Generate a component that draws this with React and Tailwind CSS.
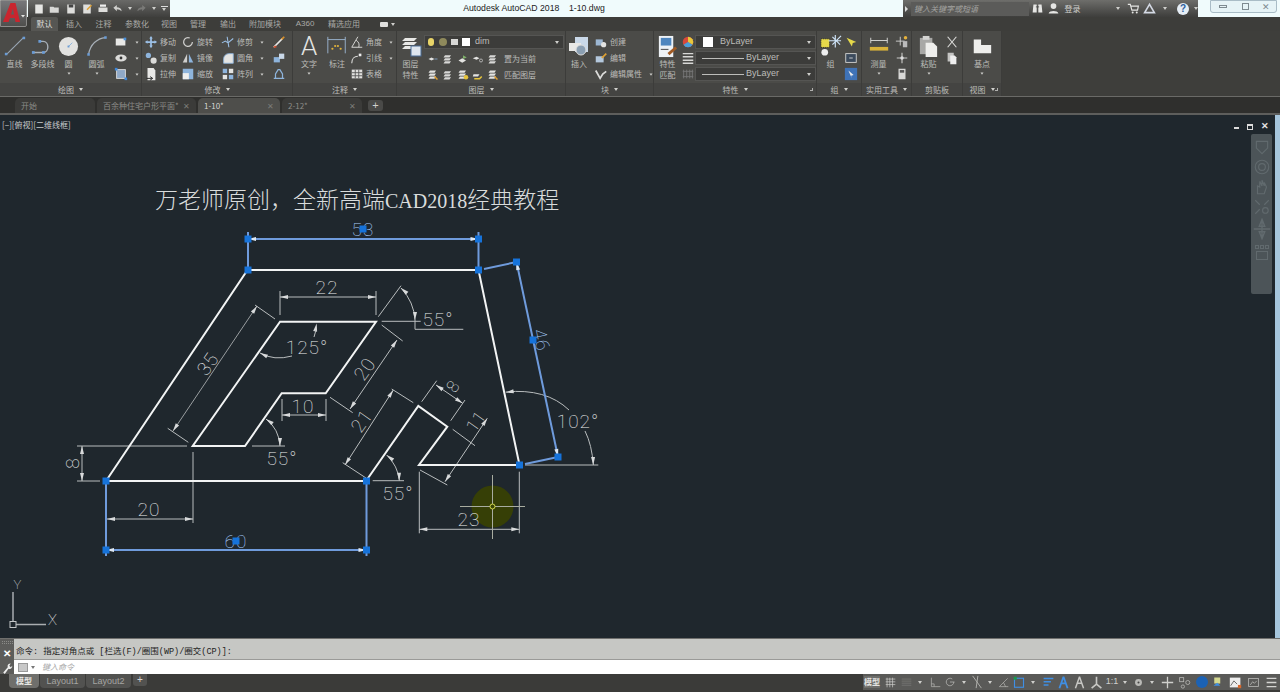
import React from 'react'

const CJK = '"Noto Sans CJK SC", "Noto Sans", sans-serif'

const Caret = ({ className = '' }) => (
    <span className={`inline-block w-0 h-0 border-x-[2.5px] border-x-transparent border-t-[3px] border-t-[#cfcfcc] ${className}`} />
)

const Ic = ({ size = 14, vb = 16, children, className = '' }) => (
    <svg width={size} height={size} viewBox={`0 0 ${vb} ${vb}`} className={`shrink-0 ${className}`}>{children}</svg>
)

// ribbon icons, all drawn on a 16 grid
const icons = {
    rect: <><rect x="2" y="4" width="11" height="8" fill="#e8e8e6" /><rect x="11" y="3" width="3" height="3" fill="#4a90d9" /></>,
    ellipse: <><ellipse cx="8" cy="8" rx="6.5" ry="4" fill="#dcdcda" /><circle cx="8" cy="8" r="1.6" fill="#333" /></>,
    hatch: <><rect x="3" y="3" width="10" height="10" fill="#8fa9c8" stroke="#e0e0e0" /><rect x="1" y="1" width="3" height="3" fill="#3f87d8" /><rect x="12" y="12" width="3" height="3" fill="#3f87d8" /></>,
    move: <path d="M8 1l2 3H9v3h3V6l3 2-3 2V9H9v3h1l-2 3-2-3h1V9H4v1L1 8l3-2v1h3V4H6z" fill="#9cc0e6" />,
    copy: <><circle cx="5" cy="5" r="3" fill="#8eb4dc" /><circle cx="11" cy="11" r="3.5" fill="#dcdcda" /></>,
    stretch: <><path d="M4 1h7l2 3v11H4z" fill="#e8e8e6" /><path d="M3 13h6M7 11l3 2-3 2" stroke="#1a1a1a" fill="none" /></>,
    rotate: <path d="M13 8a5 5 0 1 1-3-4.6" stroke="#d0d0ce" strokeWidth="1.4" fill="none" />,
    mirror: <><path d="M7 3v10H2z" fill="#cfcfcd" /><path d="M9 3v10h5z" fill="#8eb4dc" /></>,
    scale: <><rect x="2" y="2" width="12" height="12" fill="#8eb4dc" /><rect x="2" y="7" width="7" height="7" fill="#eee" /></>,
    trim: <path d="M1 9l4-2 3 2 6-5M7 2l2 12" stroke="#9cc0e6" fill="none" strokeWidth="1.2" />,
    fillet: <path d="M3 14V9a6 6 0 0 1 6-6h5v11z" fill="#e4e4e2" stroke="#8eb4dc" />,
    array: <><rect x="2" y="2" width="5" height="5" fill="#8eb4dc" /><rect x="9" y="2" width="5" height="5" fill="#e4e4e2" /><rect x="2" y="9" width="5" height="5" fill="#e4e4e2" /><rect x="9" y="9" width="5" height="5" fill="#8eb4dc" /></>,
    brush: <><path d="M2 14L12 4" stroke="#e8e8e6" strokeWidth="2" /><path d="M11 5l3-3" stroke="#d8902c" strokeWidth="2" /><path d="M2 14l3-1" stroke="#d05030" strokeWidth="2" /></>,
    boxes: <><rect x="2" y="7" width="7" height="6" fill="#8eb4dc" /><rect x="8" y="3" width="6" height="6" fill="#c9d8e8" /></>,
    offset: <path d="M2 13h12M4 13V8l3-5h2l3 5v5" stroke="#8eb4dc" strokeWidth="1.4" fill="none" />,
    angle: <path d="M2 14L9 2M2 14h12M7 6a7 7 0 0 1 3 8" stroke="#d8d8d6" fill="none" strokeWidth="1.1" />,
    leader: <><path d="M2 14c0-5 3-8 7-8" stroke="#d8d8d6" fill="none" strokeWidth="1.3" /><rect x="10" y="3" width="3" height="3" fill="#eee" /></>,
    table: <><rect x="2" y="3" width="12" height="10" fill="#e0e0de" /><path d="M2 6.5h12M2 10h12M6 3v10M10 3v10" stroke="#555" /></>,
    layerA: <><path d="M2 8l4-2 4 2-4 2z" fill="#e4e4e2" /><path d="M10 8h4" stroke="#8eb4dc" /></>,
    layerB: <><path d="M4 3h8l-2 3H2zM4 7h8l-2 3H2zM4 11h8l-2 3H2z" fill="#d8d8d6" /></>,
    layerC: <><path d="M2 10l5-3 5 3-5 3z" fill="#e4e4e2" /><path d="M8 3l5 3-5 2z" fill="#7fb06a" /></>,
    layerD: <><path d="M1 7l5-2 4 2-4 2z" fill="#e4e4e2" /><circle cx="12" cy="10" r="2" fill="none" stroke="#ccc" /></>,
    layerE: <><path d="M4 2h8l-2 3H2zM4 6h8l-2 3H2zM4 10h8l-2 3H2z" fill="#e4e4e2" /><path d="M10 10l4 4" stroke="#e0a030" strokeWidth="2" /></>,
    layerF: <><path d="M4 2h8l-2 3H2zM4 6h8l-2 3H2zM4 10h8l-2 3H2z" fill="#e4e4e2" /><circle cx="12" cy="11" r="3" fill="#e6c43c" /></>,
    layerG: <><path d="M2 7h8l-2 3H1z" fill="#e4e4e2" /><path d="M3 13h7l3-3" stroke="#e6c43c" strokeWidth="2" fill="none" /></>,
    create: <><rect x="2" y="5" width="8" height="7" fill="#9cb6d2" /><circle cx="11" cy="11" r="3" fill="#e4e4e2" /></>,
    edit: <><rect x="2" y="6" width="9" height="7" fill="#b4c8dc" /><path d="M9 8l5-5" stroke="#e0a030" strokeWidth="2" /></>,
    attr: <path d="M2 4l5 9 3-5 4-3" stroke="#dcdcda" fill="none" strokeWidth="2" />,
    wheel: <><circle cx="8" cy="8" r="6" fill="#d9493a" /><path d="M8 8V2a6 6 0 0 1 5.2 9z" fill="#e8c83c" /><path d="M8 8l5.2 3A6 6 0 0 1 2.8 11z" fill="#4a9fd9" /></>,
    lines: <path d="M2 3h12M2 6.5h12M2 10.5h12M2 14h12" stroke="#d8d8d6" strokeWidth="1.6" />,
    ltype: <path d="M3 3v10M6.5 3v10M10 3v10M13 3v10M2 5h12M2 11h12" stroke="#777" />,
    selA: <><path d="M3 3l6 10 1-4 4-1z" fill="#e6d94a" /></>,
    selB: <><rect x="2" y="3" width="12" height="10" fill="#3b4a5c" stroke="#d8d8d6" /><path d="M6 8h4" stroke="#ddd" /></>,
    selC: <><rect x="1" y="1" width="14" height="14" fill="#3f73b8" /><path d="M5 4l6 5-3 1 1 3z" fill="#eee" /></>,
    pt: <><path d="M8 2v12M2 8h12" stroke="#c8c8c6" strokeWidth="1.3" /><circle cx="8" cy="8" r="2" fill="#ddd" /></>,
    ptA: <><path d="M6 2v10M1 7h10" stroke="#d8d8d6" /><rect x="9" y="7" width="5" height="7" fill="#bbb" /><circle cx="12" cy="3" r="2" fill="#e6b23c" /></>,
    calc: <><rect x="4" y="2" width="8" height="12" fill="#d8d8d6" /><rect x="5.5" y="3.5" width="5" height="3" fill="#555" /></>,
    cut: <path d="M3 2l10 12M13 2L3 14" stroke="#dcdcda" strokeWidth="1.3" />,
    dup: <><rect x="3" y="2" width="7" height="10" fill="#c4c4c2" /><path d="M6 5h5l2 2v8H6z" fill="#eee" /></>,
}

const Icon = ({ name, size = 14 }) => <Ic size={size}>{icons[name]}</Ic>

const BigTool = ({ w, children, label, label2, caret }) => (
    <div className="flex flex-col items-center shrink-0" style={{ width: w }}>
        <div className="h-[24px] shrink-0 flex items-center justify-center">{children}</div>
        <span className="text-[8px] leading-[11px] text-[#bcbcb9] whitespace-nowrap">{label}</span>
        {label2 && <span className="text-[8px] leading-[11px] text-[#bcbcb9] whitespace-nowrap">{label2}</span>}
        {caret && <Caret className="mt-[3px] scale-75" />}
    </div>
)

const Row = ({ icon, label, caret, node }) => (
    <div className="h-[16px] flex items-center gap-[2px]">
        {node || <Icon name={icon} />}
        {label && <span className="text-[8px] text-[#bcbcb9] whitespace-nowrap">{label}</span>}
        {caret && <Caret className="ml-[5px] scale-75" />}
    </div>
)

const Col = ({ w, className = '', children }) => (
    <div className={`flex flex-col shrink-0 ${className}`} style={{ width: w }}>{children}</div>
)

const Panel = ({ w, title, launcher, noCaret, children }) => (
    <div className="flex flex-col shrink-0 bg-[#4b4b48] border-r border-[#3c3c3a]" style={{ width: w }}>
        <div className="h-[52px] flex pt-[3px]">{children}</div>
        <div className="h-[13px] bg-[#444442] flex items-center justify-center gap-[5px] relative">
            <span className="text-[8px] text-[#bcbcb9]">{title}</span>
            {!noCaret && <Caret />}
            {launcher && <span className="absolute right-[3px] top-[5px] w-[3px] h-[3px] border-r border-b border-[#b0b0ae]" />}
        </div>
    </div>
)

const Combo = ({ children }) => (
    <div className="h-[14px] mb-[2px] bg-[#3c3c3a] border border-[#555553] flex items-center pr-[4px]">
        <div className="flex-1 flex items-center min-w-0">{children}</div>
        <Caret />
    </div>
)

const ByLayer = () => (
    <>
        <span className="w-[42px] h-[1px] bg-[#bdbdba] ml-[6px] mr-[2px]" />
        <span className="text-[9px] text-[#bcbcb9]" style={{ fontFamily: '"Liberation Sans", sans-serif' }}>ByLayer</span>
    </>
)

const RibbonTab = ({ w, children, active }) => (
    <div
        className={`h-[14px] flex items-center justify-center text-[8px] shrink-0 ${active ? 'bg-[#565653] text-[#dededb] rounded-t-[2px]' : 'text-[#a9a9a6]'}`}
        style={{ width: w }}
    >
        {children}
    </div>
)

const DocTab = ({ w, label, active, close = true }) => (
    <div
        className={`h-[15px] shrink-0 mr-[2px] rounded-t-[5px] flex items-center pl-[6px] pr-[6px] justify-between text-[8px] ${active ? 'bg-[#4e4e4b] text-[#d6d6d3]' : 'bg-[#3b3b39] text-[#8b8b88]'}`}
        style={{ width: w }}
    >
        <span className="whitespace-nowrap">{label}</span>
        {close && <span className="text-[8px] leading-none text-[#7b7b78]">✕</span>}
    </div>
)

// drawing helpers for the model space
const DIM = '#b9bdbe'
const BLUE = '#6f9bdc'

const Head = ({ x1, y1, x2, y2, color = '#d8dadb', len = 8, wide = 2 }) => {
    const a = Math.atan2(y2 - y1, x2 - x1)
    const bx = x2 - Math.cos(a) * len
    const by = y2 - Math.sin(a) * len
    const nx = -Math.sin(a) * wide
    const ny = Math.cos(a) * wide
    return <polygon points={`${x2},${y2} ${bx + nx},${by + ny} ${bx - nx},${by - ny}`} fill={color} />
}

const DimLine = ({ x1, y1, x2, y2, color = DIM, width = 1, arrow = '#d8dadb' }) => (
    <g>
        <line x1={x1} y1={y1} x2={x2} y2={y2} stroke={color} strokeWidth={width} />
        <Head x1={x1} y1={y1} x2={x2} y2={y2} color={arrow} />
        <Head x1={x2} y1={y2} x2={x1} y2={y1} color={arrow} />
    </g>
)

const L = ({ p, color = DIM, width = 1 }) => (
    <line x1={p[0]} y1={p[1]} x2={p[2]} y2={p[3]} stroke={color} strokeWidth={width} />
)

const T = ({ x, y, rot = 0, color = '#eef0f0', size = 19, children }) => (
    <text
        x={x}
        y={y}
        textAnchor="middle"
        dominantBaseline="central"
        fill={color}
        fontSize={size}
        fontWeight="100"
        fontFamily='Roboto, "Liberation Sans", sans-serif'
        transform={rot ? `rotate(${rot} ${x} ${y})` : undefined}
        letterSpacing="1"
    >
        {children}
    </text>
)

const Grip = ({ x, y, s = 7 }) => <rect x={x - s / 2} y={y - s / 2} width={s} height={s} fill="#1673da" />

const Drawing = () => (
    <svg width="1280" height="523" viewBox="0 115 1280 523" className="absolute inset-0">
        {/* cursor highlight */}
        <circle cx="492.5" cy="506.5" r="21" fill="#363f06" />

        {/* thin dimensions */}
        <L p={[280, 291, 280, 315]} />
        <L p={[376, 291, 376, 315]} />
        <DimLine x1={280} y1={297} x2={376} y2={297} />
        <T x={327} y={287}>22</T>

        <L p={[167.7, 428.3, 188.3, 442.3]} />
        <L p={[255, 305, 275, 319]} />
        <DimLine x1={173} y1={431} x2={257} y2={306} width={0.8} />
        <T x={208} y={364} rot={-55}>35</T>

        <Head x1={314} y1={337} x2={316.7} y2={323.5} />
        <L p={[316, 330, 314, 337]} />
        <path d="M260 353 Q274 361 292 356" stroke={DIM} fill="none" />
        <Head x1={270} y1={358} x2={260} y2={353} />
        <T x={307} y={347}>125°</T>

        <L p={[282, 399, 282, 421]} />
        <L p={[326, 399, 326, 421]} />
        <DimLine x1={282} y1={415} x2={326} y2={415} />
        <T x={303} y={406}>10</T>

        <L p={[252, 446, 285, 446]} />
        <path d="M266 419 Q279 429 280 446" stroke={DIM} fill="none" />
        <Head x1={273} y1={424} x2={266} y2={419} />
        <Head x1={280} y1={437} x2={280} y2={446} />
        <T x={282} y={458}>55°</T>

        <L p={[77, 446, 187, 446]} />
        <L p={[77, 481, 100, 481]} />
        <DimLine x1={82} y1={446} x2={82} y2={481} />
        <T x={72} y={463} rot={-90}>8</T>

        <L p={[193, 452, 193, 523]} />
        <DimLine x1={107} y1={519} x2={193} y2={519} />
        <T x={149} y={509}>20</T>

        <L p={[381.7, 325, 402.7, 341]} />
        <L p={[330, 397.3, 352.7, 412.7]} />
        <DimLine x1={397} y1={340} x2={350} y2={409} />
        <T x={365} y={369} rot={-55}>20</T>

        <L p={[378.3, 316.7, 401, 285.7]} />
        <L p={[381.7, 321.3, 420.7, 321.3]} />
        <path d="M401 288 Q414 302 415 320 L415 329.3 L463.3 329.3" stroke={DIM} fill="none" />
        <Head x1={408} y1={294} x2={401} y2={288} />
        <Head x1={415} y1={311} x2={415} y2={320} />
        <T x={438} y={319}>55°</T>

        <L p={[391.7, 389, 413.3, 402.7]} />
        <L p={[342.7, 462.7, 366, 478]} />
        <DimLine x1={393.3} y1={390} x2={345} y2={465} />
        <T x={362} y={421} rot={-55}>21</T>

        <L p={[436.7, 380.7, 421.7, 401.7]} />
        <L p={[465, 400, 450.7, 420.7]} />
        <DimLine x1={436} y1={385} x2={462.7} y2={403.3} />
        <T x={453} y={386} rot={-55} size={17}>8</T>

        <L p={[452.7, 429.3, 475, 445.7]} />
        <L p={[420, 470, 447.3, 485]} />
        <DimLine x1={487.3} y1={418.3} x2={445} y2={481.7} />
        <T x={476} y={421} rot={-55} size={17}>11</T>

        <L p={[372.7, 480.7, 404, 480.7]} />
        <path d="M386.7 455 Q398 466 399.3 480.7" stroke={DIM} fill="none" />
        <Head x1={393} y1={460} x2={386.7} y2={455} />
        <Head x1={399} y1={472} x2={399.3} y2={480.7} />
        <T x={398} y={493}>55°</T>

        <L p={[419.3, 471.7, 419.3, 533.3]} />
        <L p={[519.3, 471.7, 519.3, 533.3]} />
        <DimLine x1={419.3} y1={529.3} x2={519.3} y2={529.3} />
        <T x={469} y={519}>23</T>

        <L p={[525, 465, 598.3, 465]} width={1.2} />
        <path d="M505.7 392 Q546 388 569 410" stroke={DIM} fill="none" />
        <path d="M585 431 Q592 445 593.3 465" stroke={DIM} fill="none" />
        <Head x1={515} y1={391} x2={505.7} y2={392.5} />
        <Head x1={593} y1={456} x2={593.3} y2={465} />
        <T x={578} y={421}>102°</T>

        {/* selected dimensions */}
        <L p={[248, 232, 248, 270]} color={BLUE} width={2} />
        <L p={[478.5, 232, 478.5, 270]} color={BLUE} width={2} />
        <DimLine x1={248} y1={239} x2={478.5} y2={239} color={BLUE} width={2} arrow="#dfe8f2" />
        <T x={363} y={229} color="#a9cdfa">53</T>

        <L p={[106, 481, 106, 556]} color={BLUE} width={2} />
        <L p={[366.5, 481, 366.5, 556]} color={BLUE} width={2} />
        <DimLine x1={106} y1={550} x2={366.5} y2={550} color={BLUE} width={2} arrow="#dfe8f2" />
        <T x={236} y={541} color="#a9cdfa">60</T>

        <L p={[484, 269, 516.5, 262]} color={BLUE} width={2} />
        <L p={[525, 464, 558, 457]} color={BLUE} width={2} />
        <DimLine x1={516.5} y1={262} x2={558} y2={457} color={BLUE} width={2} arrow="#dfe8f2" />
        <T x={541} y={340} rot={78} color="#a9cdfa">46</T>

        {/* object lines */}
        <path d="M106 481L247.5 270H478.5L519.5 465H419L447.3 426.7L418.3 406L366 481Z" stroke="#f2f4f4" strokeWidth="2" fill="none" />
        <path d="M280 321.7L192.7 446H245L281.7 393.3H325.7L376 321.7Z" stroke="#f2f4f4" strokeWidth="2" fill="none" />

        {/* crosshair */}
        <line x1="460" y1="506.5" x2="525" y2="506.5" stroke="#a8aca0" />
        <line x1="492.5" y1="475" x2="492.5" y2="539" stroke="#a8aca0" />
        <circle cx="492.5" cy="506.5" r="2.5" fill="#3a4405" stroke="#d2d84a" />

        {/* grips */}
        {[[248, 239], [248, 270], [478.5, 239], [478.5, 270], [363, 229], [106, 481], [106, 550], [366.5, 481], [366.5, 550], [236, 541], [516.5, 262], [558, 457], [533, 340], [519.5, 465]].map((g, i) => (
            <Grip key={i} x={g[0]} y={g[1]} />
        ))}

        {/* ucs icon */}
        <line x1="13" y1="592" x2="13" y2="621" stroke="#a9adb0" strokeWidth="1.5" />
        <line x1="16" y1="624.5" x2="46" y2="624.5" stroke="#a9adb0" strokeWidth="1.5" />
        <rect x="10" y="621.5" width="6" height="6" fill="none" stroke="#c4c7c8" />
        <T x={18} y={584} size={13}>Y</T>
        <T x={53} y={620} size={15}>X</T>

        {/* title */}
        <text x="155" y="208" fill="#d9dcdc" fontSize="23" fontWeight="300" fontFamily={'"Noto Sans CJK SC", serif'}>
            万老师原创{'\uFF0C'}全新高端<tspan fontSize="20" fontFamily={'"Liberation Serif", serif'}>CAD2018</tspan>经典教程
        </text>
    </svg>
)

const StatusCell = ({ w, children }) => (
    <div className="h-[16px] flex items-center justify-center shrink-0" style={{ width: w }}>{children}</div>
)

const st = '#b8b8b5'

export default function App() {
    return (
        <div className="w-[1280px] h-[692px] overflow-hidden flex flex-col bg-[#1f272d] relative" style={{ fontFamily: CJK }}>
            {/* application button */}
            <div className="absolute left-0 top-0 w-[27px] h-[27px] z-10 bg-gradient-to-b from-[#77777a] to-[#4f4f4d] border border-[#8c8c8a] rounded-br-[2px]">
                <svg width="25" height="25" viewBox="0 0 25 25">
                    <path d="M2 21L9.5 2H14.5L19 21H14.5L13.6 17H9L7.6 21Z" fill="#c9252e" />
                    <path d="M10 13.5H13L11.8 7.5Z" fill="#5f5f5d" />
                    <path d="M20 14h4l-2 2.5z" fill="#e4e4e2" />
                </svg>
            </div>

            {/* title bar */}
            <div className="h-[17px] flex shrink-0 bg-[#f0fbfc]">
                <div className="w-[28px]" />
                <div className="w-[142px] h-full bg-gradient-to-b from-[#6a6a68] to-[#3f3f3d] flex items-center pl-[3px]">
                    {[
                        <rect key="n" x="3" y="2" width="10" height="12" fill="#e6e6e4" />,
                        <path key="o" d="M1 5h5l1 1h6v7H1z" fill="#d8d8d6" />,
                        <><rect key="s" x="3" y="2" width="10" height="12" fill="#dededc" /><rect x="5" y="2" width="6" height="4" fill="#444" /></>,
                        <><rect key="a" x="3" y="2" width="10" height="12" fill="#dededc" /><path d="M8 9l6-6" stroke="#e0a030" strokeWidth="2" /></>,
                        <><rect key="p" x="2" y="6" width="12" height="6" fill="#dededc" /><rect x="4" y="2" width="8" height="3" fill="#eee" /></>,
                    ].map((c, i) => <span key={i} className="w-[16px] flex justify-center"><Ic size={12}>{c}</Ic></span>)}
                    <span className="w-[13px] flex justify-center"><Ic size={11}><path d="M2 7l5-4v3c4 0 7 2 7 6-2-2-4-3-7-3v3z" fill="#cfcfcd" /></Ic></span>
                    <span className="w-[11px] flex items-center justify-center"><Caret /></span>
                    <span className="w-[13px] flex justify-center"><Ic size={11}><path d="M14 7L9 3v3c-4 0-7 2-7 6 2-2 4-3 7-3v3z" fill="#7a7a78" /></Ic></span>
                    <span className="w-[11px] flex items-center justify-center"><Caret /></span>
                    <span className="w-[10px] flex flex-col items-center gap-[1px]"><span className="w-[7px] h-[1px] bg-[#ddd]" /><Caret /></span>
                </div>
                <div className="w-[733px] flex items-center justify-center pr-[5px] text-[8.7px] text-[#222] whitespace-pre" style={{ fontFamily: '"Liberation Sans", sans-serif' }}>
                    Autodesk AutoCAD 2018{'    '}1-10.dwg
                </div>
                <div className="w-[295px] h-full bg-gradient-to-b from-[#6e6e6b] to-[#3e3e3c] flex items-center">
                    <span className="w-[8px] flex justify-center"><span className="w-0 h-0 border-y-[3px] border-y-transparent border-l-[3px] border-l-[#ddd]" /></span>
                    <div className="w-[118px] h-[14px] bg-[#5b5b59] flex items-center pl-[3px] text-[8px] italic text-[#a3a3a0]">键入关键字或短语</div>
                    <span className="w-[18px] flex justify-center"><Ic size={13}><path d="M3 3h4v10H2zM9 3h4l1 10H9z" fill="#e6e6e4" /><path d="M6 6h4" stroke="#444" /></Ic></span>
                    <span className="w-[14px] flex justify-center"><Ic size={13}><circle cx="8" cy="5" r="3.5" fill="#e6e6e4" /><path d="M2 14c1-4 11-4 12 0z" fill="#e6e6e4" /></Ic></span>
                    <span className="w-[38px] pl-[4px] text-[8px] text-[#d0d0cd]">登录</span>
                    <span className="w-[22px] flex justify-end"><Caret /></span>
                    <span className="w-[20px] flex justify-end"><Ic size={13}><path d="M1 3h3l2 7h7l1-5H5" stroke="#e6e6e4" fill="none" strokeWidth="1.4" /><circle cx="7" cy="13" r="1.2" fill="#e6e6e4" /><circle cx="12" cy="13" r="1.2" fill="#e6e6e4" /></Ic></span>
                    <span className="w-[16px] flex justify-end"><Ic size={13}><path d="M8 3L2 13h12z" stroke="#d4d9e4" strokeWidth="2" fill="none" /></Ic></span>
                    <span className="w-[11px] flex justify-end"><Caret /></span>
                    <span className="w-[22px] flex justify-end"><span className="w-[12px] h-[12px] rounded-full bg-[#e6eef6] text-[#2d5f9e] text-[10px] font-bold leading-[12px] text-center" style={{ fontFamily: '"Liberation Sans", sans-serif' }}>?</span></span>
                    <span className="w-[9px] flex justify-end"><Caret /></span>
                </div>
                <div className="flex-1 flex items-start pl-[12px]">
                    <div className="w-[67px] h-[13px] border border-[#a9bcc6] rounded-b-[3px] bg-[#e6f3f6] flex items-center text-[#7e8a90]">
                        <span className="w-[24px] flex justify-center"><span className="w-[8px] h-[3px] border border-[#7e8a90]" /></span>
                        <span className="w-[20px] flex justify-center"><span className="w-[7px] h-[7px] border border-[#7e8a90]" /></span>
                        <span className="w-[21px] text-center text-[9px] leading-none">✕</span>
                    </div>
                </div>
            </div>

            {/* ribbon tabs */}
            <div className="h-[14px] shrink-0 bg-[#3d3d3a] flex pl-[31px] items-end">
                <RibbonTab w={27} active>默认</RibbonTab>
                <RibbonTab w={32}>插入</RibbonTab>
                <RibbonTab w={27}>注释</RibbonTab>
                <RibbonTab w={40}>参数化</RibbonTab>
                <RibbonTab w={24}>视图</RibbonTab>
                <RibbonTab w={34}>管理</RibbonTab>
                <RibbonTab w={26}>输出</RibbonTab>
                <RibbonTab w={48}>附加模块</RibbonTab>
                <RibbonTab w={32}><span style={{ fontFamily: '"Liberation Sans", sans-serif' }}>A360</span></RibbonTab>
                <RibbonTab w={46}>精选应用</RibbonTab>
                <div className="h-[14px] w-[26px] flex items-center justify-center gap-[3px] ml-[7px]">
                    <span className="w-[8px] h-[5px] rounded-[1px] bg-[#e0e0de]" />
                    <Caret />
                </div>
            </div>

            {/* ribbon */}
            <div className="h-[66px] shrink-0 bg-[#3e3e3b] flex border-b border-[#6a6a67]">
                <Panel w={142} title="绘图">
                    <BigTool w={29} label="直线">
                        <Ic size={22} vb={26}><path d="M3 23L23 3" stroke="#9aa7b4" strokeWidth="1.3" /><rect x="1" y="21" width="3" height="3" fill="#6a9bd4" /><rect x="22" y="2" width="3" height="3" fill="#6a9bd4" /></Ic>
                    </BigTool>
                    <BigTool w={27} label="多段线">
                        <Ic size={24} vb={26}><path d="M3 20h10c7 0 7-12 0-12H9" stroke="#a8b0b8" strokeWidth="1.5" fill="none" /><rect x="1" y="18.5" width="3" height="3" fill="#6a9bd4" /><rect x="12" y="18.5" width="3" height="3" fill="#6a9bd4" /><rect x="8" y="6.5" width="3" height="3" fill="#6a9bd4" /></Ic>
                    </BigTool>
                    <BigTool w={25} label="圆" caret>
                        <Ic size={21} vb={22}><circle cx="11" cy="11" r="10" fill="#e2e2e0" /><path d="M11 11l4-4" stroke="#8eb4dc" /><rect x="10" y="10" width="2" height="2" fill="#6a9bd4" /></Ic>
                    </BigTool>
                    <BigTool w={31} label="圆弧" caret>
                        <Ic size={22} vb={26}><path d="M3 23C5 11 13 4 23 3" stroke="#a8b0b8" strokeWidth="1.4" fill="none" /><rect x="1.5" y="21.5" width="3" height="3" fill="#6a9bd4" /><rect x="21.5" y="1.5" width="3" height="3" fill="#6a9bd4" /></Ic>
                    </BigTool>
                    <Col w={29} className="pl-[2px]">
                        <Row icon="rect" caret />
                        <Row icon="ellipse" caret />
                        <Row icon="hatch" caret />
                    </Col>
                </Panel>

                <Panel w={151} title="修改">
                    <Col w={39} className="pl-[2px]">
                        <Row icon="move" label="移动" />
                        <Row icon="copy" label="复制" />
                        <Row icon="stretch" label="拉伸" />
                    </Col>
                    <Col w={40}>
                        <Row icon="rotate" label="旋转" />
                        <Row icon="mirror" label="镜像" />
                        <Row icon="scale" label="缩放" />
                    </Col>
                    <Col w={51}>
                        <Row icon="trim" label="修剪" caret />
                        <Row icon="fillet" label="圆角" caret />
                        <Row icon="array" label="阵列" caret />
                    </Col>
                    <Col w={20}>
                        <Row icon="brush" />
                        <Row icon="boxes" />
                        <Row icon="offset" />
                    </Col>
                </Panel>

                <Panel w={104} title="注释">
                    <BigTool w={32} label="文字" caret>
                        <span className="text-[26px] leading-[24px] text-[#e4e4e2] font-light" style={{ fontFamily: 'Roboto, sans-serif' }}>A</span>
                    </BigTool>
                    <BigTool w={24} label="标注">
                        <Ic size={22} vb={24}><path d="M2 2v18M21 2v18M2 5h19" stroke="#9cb6d2" /><circle cx="7" cy="15" r="1.2" fill="#e0b23c" /><circle cx="10" cy="12" r="1.2" fill="#e0b23c" /><circle cx="13" cy="12" r="1.2" fill="#e0b23c" /><circle cx="16" cy="15" r="1.2" fill="#e0b23c" /></Ic>
                    </BigTool>
                    <Col w={47} className="pl-[1px]">
                        <Row icon="angle" label="角度" caret />
                        <Row icon="leader" label="引线" caret />
                        <Row icon="table" label="表格" />
                    </Col>
                </Panel>

                <Panel w={169} title="图层">
                    <BigTool w={27} label="图层" label2="特性">
                        <Ic size={22} vb={22}><path d="M5 3h12l-3 3H2zM5 7h12l-3 3H2zM5 11h12l-3 3H2z" fill="#e8e8e6" /><rect x="11" y="11" width="10" height="10" fill="#dfe6ee" stroke="#4a6d96" /></Ic>
                    </BigTool>
                    <Col w={140}>
                        <div className="mt-[1px]">
                            <Combo>
                                <span className="ml-[3px] w-[6px] h-[8px] rounded-full bg-[#e8d468]" />
                                <span className="ml-[5px] w-[8px] h-[8px] rounded-full bg-[#8f8a5c]" />
                                <span className="ml-[4px] w-[7px] h-[6px] bg-[#d8d8d6]" />
                                <span className="ml-[4px] w-[8px] h-[8px] bg-white" />
                                <span className="ml-[5px] text-[9px] text-[#bcbcb9]" style={{ fontFamily: '"Liberation Sans", sans-serif' }}>dim</span>
                            </Combo>
                        </div>
                        <div className="flex items-center pl-[3px] gap-[3px] h-[16px]">
                            <Icon name="layerA" size={12} /><Icon name="layerB" size={12} /><Icon name="layerC" size={12} /><Icon name="layerD" size={12} /><Icon name="layerB" size={12} />
                            <span className="text-[8px] text-[#bcbcb9] ml-[2px]">置为当前</span>
                        </div>
                        <div className="flex items-center pl-[3px] gap-[3px] h-[16px]">
                            <Icon name="layerE" size={12} /><Icon name="layerB" size={12} /><Icon name="layerF" size={12} /><Icon name="layerG" size={12} /><Icon name="layerE" size={12} />
                            <span className="text-[8px] text-[#bcbcb9] ml-[2px]">匹配图层</span>
                        </div>
                    </Col>
                </Panel>

                <Panel w={88} title="块">
                    <BigTool w={26} label="插入">
                        <Ic size={22} vb={22}><rect x="7" y="2" width="13" height="15" fill="#c9d8e8" /><rect x="1" y="8" width="12" height="8" fill="#e8e8e6" /><circle cx="13" cy="15" r="5" fill="#8b9fb2" stroke="#ddd" /></Ic>
                    </BigTool>
                    <Col w={61} className="pl-[2px]">
                        <Row icon="create" label="创建" />
                        <Row icon="edit" label="编辑" />
                        <Row icon="attr" label="编辑属性" caret />
                    </Col>
                </Panel>

                <Panel w={163} title="特性" launcher>
                    <BigTool w={27} label="特性" label2="匹配">
                        <Ic size={23} vb={24}><rect x="3" y="1" width="15" height="22" fill="#eef2f6" /><rect x="5" y="3" width="11" height="8" fill="#4f86bf" /><path d="M5 15h8" stroke="#444" /><path d="M13 20l8-7" stroke="#a05a24" strokeWidth="3" /></Ic>
                    </BigTool>
                    <Col w={14} className="items-center">
                        <Row icon="wheel" />
                        <Row icon="lines" />
                        <Row icon="ltype" />
                    </Col>
                    <Col w={121} className="mt-[1px]">
                        <Combo>
                            <span className="ml-[7px] w-[10px] h-[10px] bg-white" />
                            <span className="ml-[7px] text-[9px] text-[#bcbcb9]" style={{ fontFamily: '"Liberation Sans", sans-serif' }}>ByLayer</span>
                        </Combo>
                        <Combo><ByLayer /></Combo>
                        <Combo><ByLayer /></Combo>
                    </Col>
                </Panel>

                <Panel w={45} title="组">
                    <BigTool w={27} label="组">
                        <Ic size={23} vb={24}><rect x="2" y="4" width="9" height="9" fill="#e6d94a" stroke="#222" strokeDasharray="1 1" /><circle cx="6" cy="18" r="3.5" fill="#eee" /><path d="M14 10L23 1M14 2l8 8M10 6h13M17 0v13" stroke="#cfe4f8" strokeWidth="1.2" /></Ic>
                    </BigTool>
                    <Col w={17}>
                        <Row icon="selA" />
                        <Row icon="selB" />
                        <Row icon="selC" />
                    </Col>
                </Panel>

                <Panel w={50} title="实用工具">
                    <BigTool w={33} label="测量" caret>
                        <Ic size={22} vb={24}><path d="M3 6h18M3 3v6M21 3v6" stroke="#dcdcda" /><rect x="2" y="13" width="20" height="4" fill="#d9b23a" /></Ic>
                    </BigTool>
                    <Col w={16}>
                        <Row icon="ptA" />
                        <Row icon="pt" />
                        <Row icon="calc" />
                    </Col>
                </Panel>

                <Panel w={51} title="剪贴板" noCaret>
                    <BigTool w={33} label="粘贴" caret>
                        <Ic size={23} vb={24}><rect x="3" y="3" width="13" height="17" fill="#a8a8a6" /><rect x="6" y="1" width="7" height="4" fill="#d4d4d2" /><path d="M9 8h8l4 4v11H9z" fill="#eeeeec" /></Ic>
                    </BigTool>
                    <Col w={16}>
                        <Row icon="cut" />
                        <Row icon="dup" />
                    </Col>
                </Panel>

                <Panel w={39} title="视图" launcher>
                    <BigTool w={38} label="基点" caret>
                        <Ic size={22} vb={24}><path d="M3 5h8v6h11v9H3z" fill="#eeeeec" /></Ic>
                    </BigTool>
                </Panel>
            </div>

            {/* document tabs */}
            <div className="h-[16px] shrink-0 bg-[#2f2f2d] flex items-end pl-[15px]">
                <DocTab w={80} label="开始" close={false} />
                <DocTab w={99} label="百余种住宅户形平面*" />
                <DocTab w={82} label="1-10*" active />
                <DocTab w={80} label="2-12*" />
                <div className="w-[15px] h-[11px] ml-[4px] mb-[2px] rounded-[3px] bg-[#4a4a48] text-[#d0d0cd] text-[11px] leading-[11px] text-center" style={{ fontFamily: '"Liberation Sans", sans-serif' }}>+</div>
            </div>
            <div className="h-[2px] shrink-0 bg-[#5e5e5c]" />

            {/* model space */}
            <div className="h-[523px] shrink-0 relative">
                <Drawing />
                <span className="absolute left-[2px] top-[4px] text-[8px] text-[#c9ccce] whitespace-nowrap">[−][俯视][二维线框]</span>
                <div className="absolute right-[11px] top-[7px] flex items-center gap-[8px]">
                    <span className="w-[5px] h-[2px] bg-[#dcdcdc] mt-[3px]" />
                    <span className="w-[6px] h-[6px] border border-t-2 border-[#dcdcdc]" />
                    <span className="text-[#e4e4e4] text-[9px] leading-none font-bold" style={{ fontFamily: '"Liberation Sans", sans-serif' }}>✕</span>
                </div>
                {/* navigation bar */}
                <div className="absolute left-[1251px] top-[19px] w-[21px] h-[160px] rounded-[2px] bg-[#4c5458] flex flex-col items-center pt-[4px] gap-[2px]">
                    <Ic size={18}><path d="M3 3h10v6l-5 5-5-5z" fill="none" stroke="#616a6e" /></Ic>
                    <Ic size={18}><circle cx="8" cy="8" r="6" fill="none" stroke="#616a6e" /><circle cx="8" cy="8" r="3" fill="none" stroke="#616a6e" /></Ic>
                    <Ic size={18}><path d="M4 14V7l2 1V3l2 4V2l2 5V4l2 4-2 6z" fill="none" stroke="#616a6e" /></Ic>
                    <Ic size={18}><path d="M2 2l4 4M14 2l-4 4M2 14l4-4" stroke="#616a6e" /><circle cx="11" cy="11" r="2.5" fill="none" stroke="#616a6e" /></Ic>
                    <Ic size={22}><path d="M8 1v14M2 8h12M8 1l2 5h-4zM8 15l2-5h-4z" fill="none" stroke="#616a6e" /></Ic>
                    <div className="flex gap-[1px] mt-[3px]"><span className="w-[4px] h-[4px] border border-[#616a6e]" /><span className="w-[4px] h-[4px] border border-[#616a6e]" /><span className="w-[4px] h-[4px] border border-[#616a6e]" /></div>
                    <span className="w-[12px] h-[9px] border border-[#616a6e]" />
                </div>
                <div className="absolute right-0 top-0 bottom-0 w-[5px] bg-[#a6c6dd]" />
            </div>

            {/* command line */}
            <div className="h-[36px] shrink-0 flex border-t border-[#6f6f6d] bg-[#c6c7c4] relative">
                <div className="w-[14px] bg-[#5d5d5b] flex flex-col items-center">
                    <span className="w-[11px] h-[4px] mt-[2px] border-y border-dotted border-[#8b8b88]" />
                    <span className="text-white text-[10px] leading-none font-bold mt-[5px]" style={{ fontFamily: '"Liberation Sans", sans-serif' }}>✕</span>
                    <Ic size={12} className="mt-[3px]"><path d="M3 14l6-7c-1-3 1-5 4-5l-2 3 2 2 2-2c0 3-2 5-5 4l-5 7z" fill="#eee" /></Ic>
                </div>
                <div className="flex-1 flex flex-col">
                    <div className="h-[20px] flex items-end pl-[2px] text-[8.5px] text-[#1d1d1d] whitespace-pre" style={{ fontFamily: '"Liberation Mono", "Noto Sans CJK SC", monospace' }}>命令: 指定对角点或 [栏选(F)/圈围(WP)/圈交(CP)]:</div>
                    <div className="h-[15px] bg-white border-t border-[#9a9a98] flex items-center pl-[4px]">
                        <span className="w-[10px] h-[9px] bg-[#c8c8c8] border border-[#999]" />
                        <Caret className="ml-[3px] !border-t-[#777]" />
                        <span className="ml-[7px] text-[8px] italic text-[#a8a8a8]">键入命令</span>
                    </div>
                </div>
            </div>

            {/* layout tabs and status bar */}
            <div className="flex-1 bg-[#3b3b39] flex">
                <div className="flex items-start w-[863px] shrink-0 pl-[9px]">
                    <div className="w-[30px] h-[14px] bg-[#6f6f6c] rounded-b-[4px] text-[8px] leading-[14px] text-center text-[#e8e8e6] font-bold">模型</div>
                    <div className="w-[45px] ml-[1px] h-[14px] bg-[#525250] rounded-b-[4px] text-[9px] leading-[14px] text-center text-[#a5a5a2]" style={{ fontFamily: '"Liberation Sans", sans-serif' }}>Layout1</div>
                    <div className="w-[45px] ml-[1px] h-[14px] bg-[#525250] rounded-b-[4px] text-[9px] leading-[14px] text-center text-[#a5a5a2]" style={{ fontFamily: '"Liberation Sans", sans-serif' }}>Layout2</div>
                    <div className="w-[14px] ml-[2px] h-[12px] bg-[#525250] rounded-b-[3px] text-[10px] leading-[12px] text-center text-[#d4d4d1]" style={{ fontFamily: '"Liberation Sans", sans-serif' }}>+</div>
                </div>
                <div className="flex-1 h-[16px] bg-[#5a5a58] flex items-center">
                    <StatusCell w={18}><span className="text-[8px] font-bold text-[#e4e4e2] bg-[#6e6e6b] whitespace-nowrap">模型</span></StatusCell>
                    <StatusCell w={18}><Ic size={11}><path d="M3 1v14M7 1v14M11 1v14M1 3h14M1 7h14M1 11h14" stroke="#cfcfcc" /></Ic></StatusCell>
                    <StatusCell w={14}><Ic size={11}><path d="M1 3h14M1 6h14M1 9h14M1 12h14" stroke="#7e7e7b" /></Ic></StatusCell>
                    <StatusCell w={14}><Caret /></StatusCell>
                    <StatusCell w={16}><Ic size={11}><path d="M2 1v13h13M6 14v-4h-4" stroke={st} fill="none" /></Ic></StatusCell>
                    <StatusCell w={14}><Ic size={12}><path d="M13 8a5 5 0 1 1-2-4M8 8h6" stroke={st} fill="none" /></Ic></StatusCell>
                    <StatusCell w={13}><Caret /></StatusCell>
                    <StatusCell w={13}><Ic size={14}><path d="M3 1l10 14M9 1L7 15" stroke={st} fill="none" /></Ic></StatusCell>
                    <StatusCell w={13}><Caret /></StatusCell>
                    <StatusCell w={15}><Ic size={11}><path d="M14 2L2 14h13M8 8l3 6" stroke={st} fill="none" /></Ic></StatusCell>
                    <StatusCell w={15}><Ic size={12}><rect x="2" y="3" width="12" height="12" fill="none" stroke="#3f8fe4" strokeWidth="1.5" /><rect x="1" y="1" width="4" height="4" fill="#1a9a4c" /></Ic></StatusCell>
                    <StatusCell w={14}><Caret /></StatusCell>
                    <StatusCell w={16}><Ic size={13}><path d="M2 3h12M2 7h9M2 11h6" stroke="#3f8fe4" strokeWidth="2" /></Ic></StatusCell>
                    <StatusCell w={15}><Ic size={13}><path d="M8 1L3 15M8 1l5 14M5 9h6" stroke="#3f8fe4" strokeWidth="2.2" fill="none" /></Ic></StatusCell>
                    <StatusCell w={16}><Ic size={13}><path d="M8 1L3 15M8 1l5 14M5 9h6" stroke="#c8c8c5" strokeWidth="1.8" fill="none" /></Ic></StatusCell>
                    <StatusCell w={18}><Ic size={13}><path d="M8 1v9L2 15M8 10l6 5" stroke="#c8c8c5" strokeWidth="2" fill="none" /></Ic></StatusCell>
                    <StatusCell w={14}><span className="text-[9px] text-[#d0d0cd]" style={{ fontFamily: '"Liberation Sans", sans-serif' }}>1:1</span></StatusCell>
                    <StatusCell w={12}><Caret /></StatusCell>
                    <StatusCell w={14}><Ic size={11}><circle cx="8" cy="8" r="5" fill="#b9b9b6" /><circle cx="8" cy="8" r="1.5" fill="#444" /></Ic></StatusCell>
                    <StatusCell w={14}><Caret /></StatusCell>
                    <StatusCell w={16}><Ic size={13}><path d="M8 1v14M1 8h14" stroke="#cfcfcc" strokeWidth="1.6" /></Ic></StatusCell>
                    <StatusCell w={18}><Ic size={13}><rect x="2" y="2" width="5" height="5" fill="none" stroke={st} /><circle cx="12" cy="8" r="2.5" fill="none" stroke={st} /><circle cx="6" cy="13" r="2" fill="none" stroke={st} /></Ic></StatusCell>
                    <StatusCell w={17}><span className="w-[12px] h-[12px] rounded-full bg-[#1c62b4]" /></StatusCell>
                    <StatusCell w={16}><Ic size={12}><rect x="3" y="2" width="8" height="8" fill="#d4d890" /><path d="M2 13l5-4 4 4z" fill="#3f8fe4" /></Ic></StatusCell>
                    <StatusCell w={18}><Ic size={13}><rect x="1" y="2" width="13" height="12" fill="#eee" /><path d="M2 12l4-6 4 4" stroke="#555" fill="none" /><rect x="11" y="11" width="4" height="4" fill="#d8682c" /></Ic></StatusCell>
                    <StatusCell w={18}><Ic size={13}><rect x="2" y="3" width="12" height="10" fill="none" stroke={st} /><path d="M4 11l3-4 2 2 3-3" stroke={st} fill="none" /></Ic></StatusCell>
                    <StatusCell w={18}><Ic size={13}><path d="M2 3h12M2 8h12M2 13h12" stroke="#d4d4d1" strokeWidth="1.6" /></Ic></StatusCell>
                </div>
            </div>
        </div>
    )
}
